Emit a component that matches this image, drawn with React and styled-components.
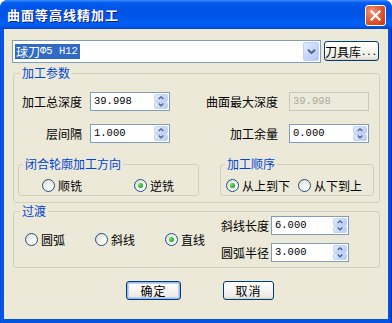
import React from 'react'
import styled, { createGlobalStyle } from 'styled-components'

const Global = createGlobalStyle`
  html, body {
    margin: 0;
    padding: 0;
    background: #fff;
  }
  body {
    font-family: "Noto Sans CJK SC", "Liberation Sans", sans-serif;
    font-size: 12px;
    color: #000;
  }
`

const Window = styled.div`
  width: 392px;
  height: 323px;
  display: flex;
  flex-direction: column;
  background: linear-gradient(to right, #0831d9 0px, #0a5bee 1px, #0055e5 3px, #0055e5 calc(100% - 3px), #0842cf calc(100% - 1px), #001ea0 100%);
  border-radius: 8px 8px 0 0;
  overflow: hidden;
`

const TitleBar = styled.div`
  height: 29px;
  flex: none;
  display: flex;
  align-items: center;
  justify-content: space-between;
  padding: 0 6px 0 7px;
  background: linear-gradient(to bottom, #3c8eff 0%, #0a60f0 8%, #0055ea 20%, #0053e4 50%, #0060f5 80%, #0057e8 92%, #0040d2 100%);
`

const Title = styled.div`
  color: #fff;
  font-weight: bold;
  font-size: 13px;
  letter-spacing: 1px;
  text-shadow: 1px 1px 0 #0a1d8a;
  margin-top: -1px;
`

const CloseButton = styled.div`
  width: 21px;
  height: 21px;
  box-sizing: border-box;
  border: 1px solid #fff;
  border-radius: 3px;
  background: radial-gradient(circle at 30% 30%, #f29a7e 0%, #e46a47 35%, #d2451f 75%, #c13812 100%);
  display: flex;
  align-items: center;
  justify-content: center;
  margin-top: 1px;
`

const Client = styled.div`
  flex: 1;
  margin: 0 4px 4px;
  background: #ece9d8;
  display: flex;
  flex-direction: column;
`

const ToolRow = styled.div`
  display: flex;
  align-items: flex-start;
  gap: 3px;
  padding: 11px 0 0 8px;
`

const Combo = styled.div`
  width: 309px;
  height: 23px;
  box-sizing: border-box;
  border: 1px solid #7f9db9;
  background: #fff;
  display: flex;
  align-items: center;
  padding: 1px;
`

const ComboText = styled.div`
  flex: 1;
  display: flex;
  align-items: center;
  padding-left: 1px;
`

const Selected = styled.span`
  background: #316ac5;
  color: #fff;
  height: 15px;
  line-height: 15px;
  padding: 0 2px 0 1px;
  display: inline-flex;
  align-items: center;
`

const Mono = styled.span`
  font-family: "Liberation Mono", monospace;
  font-size: 10.5px;
`

const Dots = styled.span`
  font-family: "Liberation Sans", sans-serif;
  font-size: 12px;
  letter-spacing: 2px;
  margin-left: 1px;
`

const ArrowButton = styled.div`
  width: 16px;
  height: 19px;
  box-sizing: border-box;
  border: 1px solid #bdd0f7;
  border-radius: 2px;
  background: linear-gradient(135deg, #e2ebfe 0%, #c3d4fb 60%, #b4c8f6 100%);
  display: flex;
  align-items: center;
  justify-content: center;
`

const Button = styled.div`
  width: ${p => p.$w}px;
  height: ${p => p.$h || 19}px;
  box-sizing: border-box;
  border: 1px solid #003c74;
  border-radius: 3px;
  background: linear-gradient(to bottom, #ffffff 0%, #f5f4ef 50%, #ecebe6 85%, #d6d0c5 100%);
  box-shadow: ${p => (p.$default ? 'inset 0 0 0 1px #9db8ee, inset 0 0 0 2px #bed0f2' : 'none')};
  display: flex;
  align-items: center;
  justify-content: center;
  white-space: nowrap;
  margin-top: ${p => p.$mt || 0}px;
  letter-spacing: ${p => p.$ls || 0}px;
`

const Group = styled.fieldset`
  margin: ${p => p.$m};
  padding: ${p => p.$p};
  border: 1px solid #d0d0bf;
  border-radius: 3px;
  min-width: 0;
  box-sizing: border-box;
  width: ${p => (p.$w ? `${p.$w}px` : 'auto')};
`

const Legend = styled.legend`
  color: #0046d5;
  font-size: 12px;
  line-height: 14px;
  padding: 0 2px;
  margin-left: ${p => p.$ml || 4}px;
`

const ParamGrid = styled.div`
  display: grid;
  grid-template-columns: 76px 80px 119px 80px;
  grid-auto-rows: 19px;
  row-gap: 13px;
  align-items: center;
`

const Label = styled.div`
  text-align: right;
  padding-right: ${p => p.$pr || 8}px;
  white-space: nowrap;
`

const Spin = styled.div`
  width: ${p => p.$w || 80}px;
  height: 19px;
  box-sizing: border-box;
  border: 1px solid ${p => (p.$disabled ? '#c9c7ba' : '#7f9db9')};
  background: ${p => (p.$disabled ? '#ebeadb' : '#fff')};
  color: ${p => (p.$disabled ? '#aca899' : '#000')};
  display: flex;
  padding: 1px;
`

const SpinText = styled.div`
  flex: 1;
  font-family: "Liberation Mono", monospace;
  font-size: 10.5px;
  line-height: 15px;
  padding-left: 2px;
`

const SpinButtons = styled.div`
  width: 14px;
  display: flex;
  flex-direction: column;
`

const SpinHalf = styled.div`
  flex: 1;
  box-sizing: border-box;
  border: 1px solid #c3d3f5;
  border-radius: 2px;
  background: linear-gradient(135deg, #e4ecfe 0%, #c6d6fb 60%, #b6caf6 100%);
  display: flex;
  align-items: center;
  justify-content: center;
`

const SubRow = styled.div`
  display: flex;
  gap: 21px;
  padding-left: 4px;
  margin-top: 14px;
`

const RadioRow = styled.div`
  height: 16px;
  display: flex;
  align-items: center;
  padding-left: ${p => p.$pl}px;
  gap: ${p => p.$gap}px;
`

const RadioItem = styled.div`
  display: flex;
  align-items: center;
  gap: 3px;
`

const RadioCircle = styled.span`
  width: 13px;
  height: 13px;
  box-sizing: border-box;
  border-radius: 50%;
  border: 1px solid #1c5180;
  background: linear-gradient(135deg, #d8d8d0 0%, #f4f4f0 50%, #ffffff 100%);
  display: inline-flex;
  align-items: center;
  justify-content: center;
`

const Dot = styled.span`
  width: 5px;
  height: 5px;
  border-radius: 50%;
  background: radial-gradient(circle at 35% 35%, #6ee86a 0%, #2fb22c 55%, #1c8a1a 100%);
`

const TransitionBody = styled.div`
  display: flex;
  align-items: center;
  justify-content: space-between;
  padding-right: 30px;
  margin-top: -2px;
`

const FieldStack = styled.div`
  display: flex;
  flex-direction: column;
  gap: 8px;
`

const FieldRow = styled.div`
  display: flex;
  align-items: center;
  gap: 2px;
`

const Footer = styled.div`
  display: flex;
  justify-content: center;
  gap: 42px;
  margin-top: 13px;
  padding-left: 8px;
`

function Chevron({ up, size = 7 }) {
  return (
    <svg width={size} height={size * 0.6} viewBox="0 0 7 4.2">
      <path
        d={up ? 'M0.8 3.6 L3.5 1 L6.2 3.6' : 'M0.8 0.6 L3.5 3.2 L6.2 0.6'}
        fill="none"
        stroke="#4d6185"
        strokeWidth="1.5"
      />
    </svg>
  )
}

function SpinBox({ value, disabled, w }) {
  return (
    <Spin $disabled={disabled} $w={w}>
      <SpinText>{value}</SpinText>
      {!disabled && (
        <SpinButtons>
          <SpinHalf><Chevron up size={6} /></SpinHalf>
          <SpinHalf><Chevron size={6} /></SpinHalf>
        </SpinButtons>
      )}
    </Spin>
  )
}

function Radio({ checked, children }) {
  return (
    <RadioItem>
      <RadioCircle>{checked && <Dot />}</RadioCircle>
      <span>{children}</span>
    </RadioItem>
  )
}

export default function App() {
  return (
    <>
      <Global />
      <Window>
        <TitleBar>
          <Title>曲面等高线精加工</Title>
          <CloseButton>
            <svg width="11" height="11" viewBox="0 0 11 11">
              <path d="M1.5 1.5 L9.5 9.5 M9.5 1.5 L1.5 9.5" stroke="#fff" strokeWidth="2.2" strokeLinecap="square" />
            </svg>
          </CloseButton>
        </TitleBar>
        <Client>
          <ToolRow>
            <Combo>
              <ComboText>
                <Selected>球刀<Mono>Φ5 H12</Mono></Selected>
              </ComboText>
              <ArrowButton><Chevron size={9} /></ArrowButton>
            </Combo>
            <Button $w={55} $h={20} $mt={1}>刀具库<Dots>...</Dots></Button>
          </ToolRow>

          <Group $m="3px 8px 0 9px" $p="12px 0 6px 0">
            <Legend $ml={6}>加工参数</Legend>
            <ParamGrid>
              <Label>加工总深度</Label>
              <SpinBox value="39.998" />
              <Label $pr={11}>曲面最大深度</Label>
              <SpinBox value="39.998" disabled />
              <Label>层间隔</Label>
              <SpinBox value="1.000" />
              <Label $pr={11}>加工余量</Label>
              <SpinBox value="0.000" />
            </ParamGrid>
            <SubRow>
              <Group $w={181} $m="0" $p="6px 0 2px 0">
                <Legend>闭合轮廓加工方向</Legend>
                <RadioRow $pl={23} $gap={52}>
                  <Radio>顺铣</Radio>
                  <Radio checked>逆铣</Radio>
                </RadioRow>
              </Group>
              <Group $w={154} $m="0" $p="6px 0 2px 0">
                <Legend>加工顺序</Legend>
                <RadioRow $pl={5} $gap={8}>
                  <Radio checked>从上到下</Radio>
                  <Radio>从下到上</Radio>
                </RadioRow>
              </Group>
            </SubRow>
          </Group>

          <Group $m="1px 8px 0 9px" $p="0 0 5px 0">
            <Legend $ml={6}>过渡</Legend>
            <TransitionBody>
              <RadioRow $pl={11} $gap={30}>
                <Radio>圆弧</Radio>
                <Radio>斜线</Radio>
                <Radio checked>直线</Radio>
              </RadioRow>
              <FieldStack>
                <FieldRow>
                  <span>斜线长度</span>
                  <SpinBox value="6.000" w={78} />
                </FieldRow>
                <FieldRow>
                  <span>圆弧半径</span>
                  <SpinBox value="3.000" w={78} />
                </FieldRow>
              </FieldStack>
            </TransitionBody>
          </Group>

          <Footer>
            <Button $w={55} $default $ls={1}>确定</Button>
            <Button $w={51} $ls={1}>取消</Button>
          </Footer>
        </Client>
      </Window>
    </>
  )
}
